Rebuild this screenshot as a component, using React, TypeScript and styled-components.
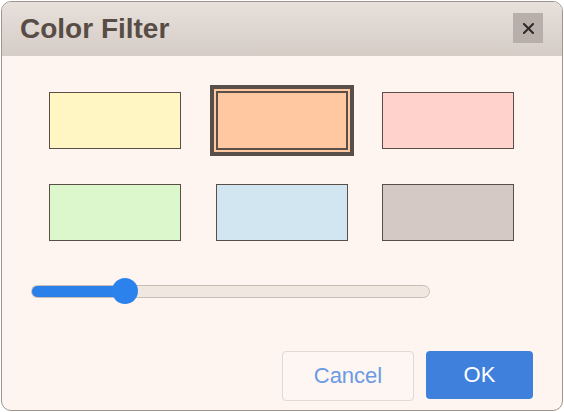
import * as React from 'react'
import { useState } from 'react'
import styled, { createGlobalStyle } from 'styled-components'

const GlobalStyle = createGlobalStyle`
  html, body {
    margin: 0;
    padding: 0;
    background: #ffffff;
  }
  body {
    font-family: "Liberation Sans", Arial, sans-serif;
  }
`

const Page = styled.div`
  width: 564px;
  height: 412px;
  padding: 1px;
  box-sizing: border-box;
  display: flex;
`

const Dialog = styled.div`
  flex: 1;
  display: flex;
  flex-direction: column;
  background: #fef5f0;
  border: 1px solid #a0958e;
  border-radius: 10px;
  overflow: hidden;
`

const Header = styled.div`
  height: 54px;
  flex-shrink: 0;
  display: flex;
  align-items: center;
  justify-content: space-between;
  padding: 0 19px 0 18px;
  background: linear-gradient(to bottom, #e8e0db, #d5ccc6);
`

const Title = styled.h1`
  margin: 0;
  font-size: 28px;
  font-weight: 700;
  color: #584c46;
`

const CloseButton = styled.button`
  width: 30px;
  height: 30px;
  margin-top: -2px;
  border: none;
  padding: 0;
  background: #b8afaa;
  display: flex;
  align-items: center;
  justify-content: center;
  cursor: pointer;
`

const Body = styled.div`
  flex: 1;
  display: flex;
  flex-direction: column;
  padding: 36px 0 0 29px;
`

const SwatchGrid = styled.div`
  display: grid;
  grid-template-columns: repeat(3, 132px);
  grid-auto-rows: 57px;
  column-gap: 34.5px;
  row-gap: 35px;
  align-items: center;
  margin-left: 18px;
`

const Swatch = styled.div<{ $color: string; $selected?: boolean }>`
  box-sizing: border-box;
  width: 132px;
  height: ${p => (p.$selected ? '59px' : '57px')};
  background: ${p => p.$color};
  border: ${p => (p.$selected ? '2px' : '1px')} solid #5a4e48;
  box-shadow: ${p => (p.$selected ? `0 0 0 2px ${p.$color}, 0 0 0 6px #5a4e48` : 'none')};
  cursor: pointer;
`

const SliderRow = styled.div`
  margin-top: 37px;
  display: flex;
`

const Range = styled.input`
  -webkit-appearance: none;
  appearance: none;
  width: 399px;
  height: 26px;
  margin: 0;
  background: transparent;

  &::-webkit-slider-runnable-track {
    height: 13px;
    border-radius: 7px;
    box-sizing: border-box;
    border: 1px solid #c9bdb6;
    background: linear-gradient(
      to right,
      #2b80ea 0,
      #2b80ea var(--fill),
      #f1e7e1 var(--fill),
      #f1e7e1 100%
    );
  }

  &::-webkit-slider-thumb {
    -webkit-appearance: none;
    width: 26px;
    height: 26px;
    border-radius: 50%;
    background: #2b82ec;
    border: none;
    margin-top: -7.5px;
  }
`

const Footer = styled.div`
  margin-top: auto;
  display: flex;
  justify-content: flex-end;
  align-items: flex-start;
  gap: 12px;
  padding: 0 29px 9px 0;
`

const Button = styled.button<{ $primary?: boolean }>`
  font-family: "Liberation Sans", Arial, sans-serif;
  font-size: 22px;
  border-radius: 4px;
  cursor: pointer;
  box-sizing: border-box;
  width: ${p => (p.$primary ? '107px' : '132px')};
  height: ${p => (p.$primary ? '48px' : '50px')};
  padding: 0;
  border: ${p => (p.$primary ? 'none' : '1px solid #e4d8d2')};
  background: ${p => (p.$primary ? '#3f80dd' : '#fdf6f2')};
  color: ${p => (p.$primary ? '#ffffff' : '#6a9be2')};
`

const swatches = [
  '#fff6c4',
  '#ffc8a0',
  '#ffd3cc',
  '#dbf7cb',
  '#d2e6f2',
  '#d4c9c4',
]

const TRACK = 399
const THUMB = 26

export default function App() {
  const [selected, setSelected] = useState(1)
  const [value, setValue] = useState(21.5)

  // thumb centre travels over track width minus thumb size
  const fill = `${THUMB / 2 + (value * (TRACK - THUMB)) / 100}px`

  return (
    <>
      <GlobalStyle />
      <Page>
        <Dialog>
          <Header>
            <Title>Color Filter</Title>
            <CloseButton aria-label="Close">
              <svg width="11" height="11" viewBox="0 0 11 11">
                <path d="M1 1 L10 10 M10 1 L1 10" stroke="#2e2826" strokeWidth="2" strokeLinecap="square" />
              </svg>
            </CloseButton>
          </Header>
          <Body>
            <SwatchGrid>
              {swatches.map((c, i) => (
                <Swatch key={c} $color={c} $selected={i === selected} onClick={() => setSelected(i)} />
              ))}
            </SwatchGrid>
            <SliderRow>
              <Range
                type="range"
                min={0}
                max={100}
                step={0.5}
                value={value}
                onChange={e => setValue(Number(e.target.value))}
                style={{ ['--fill' as any]: fill }}
              />
            </SliderRow>
            <Footer>
              <Button>Cancel</Button>
              <Button $primary>OK</Button>
            </Footer>
          </Body>
        </Dialog>
      </Page>
    </>
  )
}
